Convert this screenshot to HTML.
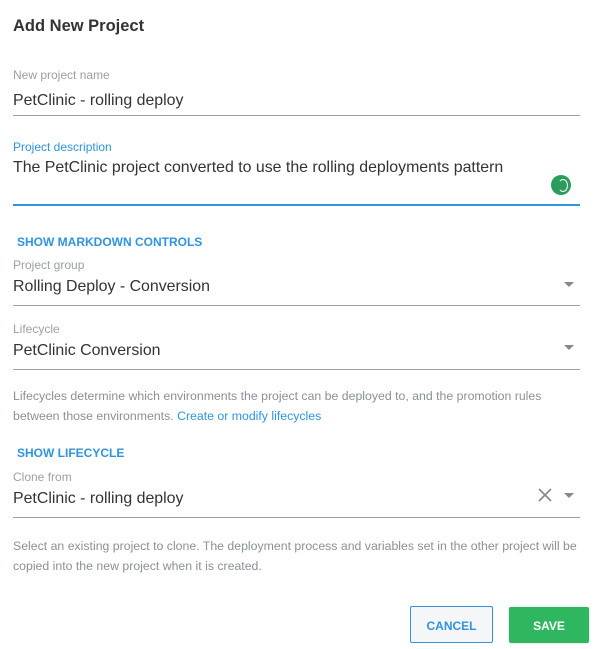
<!DOCTYPE html>
<html><head><meta charset="utf-8"><style>
body{margin:0;width:596px;height:649px;background:#fff;font-family:"Liberation Sans",sans-serif;position:relative;overflow:hidden;color:#333}
.a{position:absolute;white-space:nowrap}
.t{left:13px;top:17px;font-size:16.5px;font-weight:bold;color:#333}
.l{left:13px;font-size:12px;color:#9aa0a6}
.v{left:13px;font-size:15.9px;color:#333}
.u{position:absolute;left:13px;width:567px;height:1px;background:#9e9e9e}
.lk{left:17px;font-size:12px;font-weight:bold;color:#2f93e0}
.h{left:13px;font-size:12.3px;color:#8a9096;line-height:20px}
.ar{position:absolute;width:0;height:0;border-left:5px solid transparent;border-right:5px solid transparent;border-top:5px solid #888}
</style></head><body>
<div class="a t">Add New Project</div>
<div class="a l" style="top:68px">New project name</div>
<div class="a v" style="top:92px">PetClinic - rolling deploy</div>
<div class="u" style="top:115px"></div>
<div class="a l" style="top:140px;color:#2f93e0">Project description</div>
<div class="a v" style="top:159px">The PetClinic project converted to use the rolling deployments pattern</div>
<div style="position:absolute;left:551px;top:175px;width:20px;height:20px;border-radius:50%;background:#2a9d5c"></div>
<div style="position:absolute;left:558px;top:179px;width:8px;height:11px;border:1.5px solid #fff;border-left-color:transparent;border-radius:50%"></div>
<div class="u" style="top:204px;height:2px;background:#2f93e0"></div>
<div class="a lk" style="top:235px">SHOW MARKDOWN CONTROLS</div>
<div class="a l" style="top:258px">Project group</div>
<div class="a v" style="top:278px">Rolling Deploy - Conversion</div>
<div class="ar" style="left:564px;top:282px"></div>
<div class="u" style="top:305px"></div>
<div class="a l" style="top:322px">Lifecycle</div>
<div class="a v" style="top:342px">PetClinic Conversion</div>
<div class="ar" style="left:564px;top:345px"></div>
<div class="u" style="top:369px"></div>
<div class="a h" style="top:386px">Lifecycles determine which environments the project can be deployed to, and the promotion rules<br>between those environments. <span style="color:#2f93e0">Create or modify lifecycles</span></div>
<div class="a lk" style="top:446px">SHOW LIFECYCLE</div>
<div class="a l" style="top:470px">Clone from</div>
<div class="a v" style="top:490px">PetClinic - rolling deploy</div>
<svg style="position:absolute;left:538px;top:488px" width="14" height="14"><path d="M1 1L13 13M13 1L1 13" stroke="#888" stroke-width="1.6"/></svg>
<div class="ar" style="left:564px;top:493px"></div>
<div class="u" style="top:517px"></div>
<div class="a h" style="top:536px">Select an existing project to clone. The deployment process and variables set in the other project will be<br>copied into the new project when it is created.</div>
<div style="position:absolute;left:410px;top:606px;width:81px;height:35px;border:1px solid #2f93e0;border-radius:2px;background:#f4f6f8;color:#2f93e0;font-size:12px;font-weight:bold;text-align:center;line-height:38px">CANCEL</div>
<div style="position:absolute;left:509px;top:607px;width:80px;height:36px;background:#2fb760;border-radius:2px;color:#fff;font-size:12px;font-weight:bold;text-align:center;line-height:38px;box-shadow:0 0 2px #ccc">SAVE</div>
</body></html>
